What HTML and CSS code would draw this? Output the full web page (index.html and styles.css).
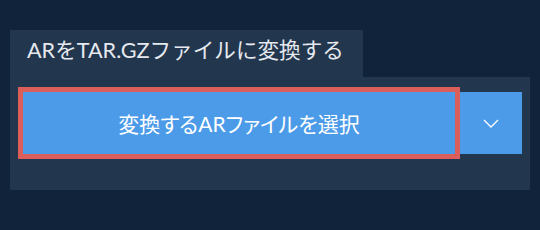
FILE: index.html
```html
<!DOCTYPE html>
<html lang="ja">
<head>
	<meta charset="UTF-8">
	<title>ARをTAR.GZファイルに変換する</title>
	<link rel="stylesheet" href="styles.css">
</head>
<body>
	<div class="wrap">
		<div class="tab">ARをTAR.GZファイルに変換する</div>
		<div class="panel">
			<div class="pick">
				<div class="pick-main">変換するARファイルを選択</div>
				<div class="pick-more">
					<svg width="16" height="9" viewBox="0 0 16 9"><path d="M1 1 L8 8 L15 1" fill="none" stroke="#fff" stroke-width="1.3"/></svg>
				</div>
			</div>
		</div>
	</div>
</body>
</html>
```

FILE: styles.css
```css
*{
	margin: 0;
	padding: 0;
	box-sizing: border-box;
}
body{
	background: #11233a;
	font-family: Lato, "Noto Sans CJK JP", sans-serif;
	width: 540px;
	height: 230px;
}
.wrap{
	padding: 30px 10px 0 10px;
}
.tab{
	display: inline-block;
	vertical-align: top;
	background: #22364e;
	color: #e6e9ee;
	font-size: 21.6px;
	height: 47px;
	line-height: 40px;
	padding: 0 19px 0 17px;
	width: 353px;
	white-space: nowrap;
}
.panel{
	background: #22364e;
	width: 520px;
	padding: 15px 8px 36px 13px;
}
.pick{
	display: flex;
	height: 62px;
}
.pick-main{
	width: 432px;
	background: #4c9be8;
	outline: 5px solid #dc5e5a;
	color: #fff;
	font-size: 21px;
	font-feature-settings: "palt";
	display: flex;
	align-items: center;
	justify-content: center;
	margin-right: 5px;
}
.pick-more{
	width: 62px;
	background: #4c9be8;
	display: flex;
	align-items: center;
	justify-content: center;
}
```
